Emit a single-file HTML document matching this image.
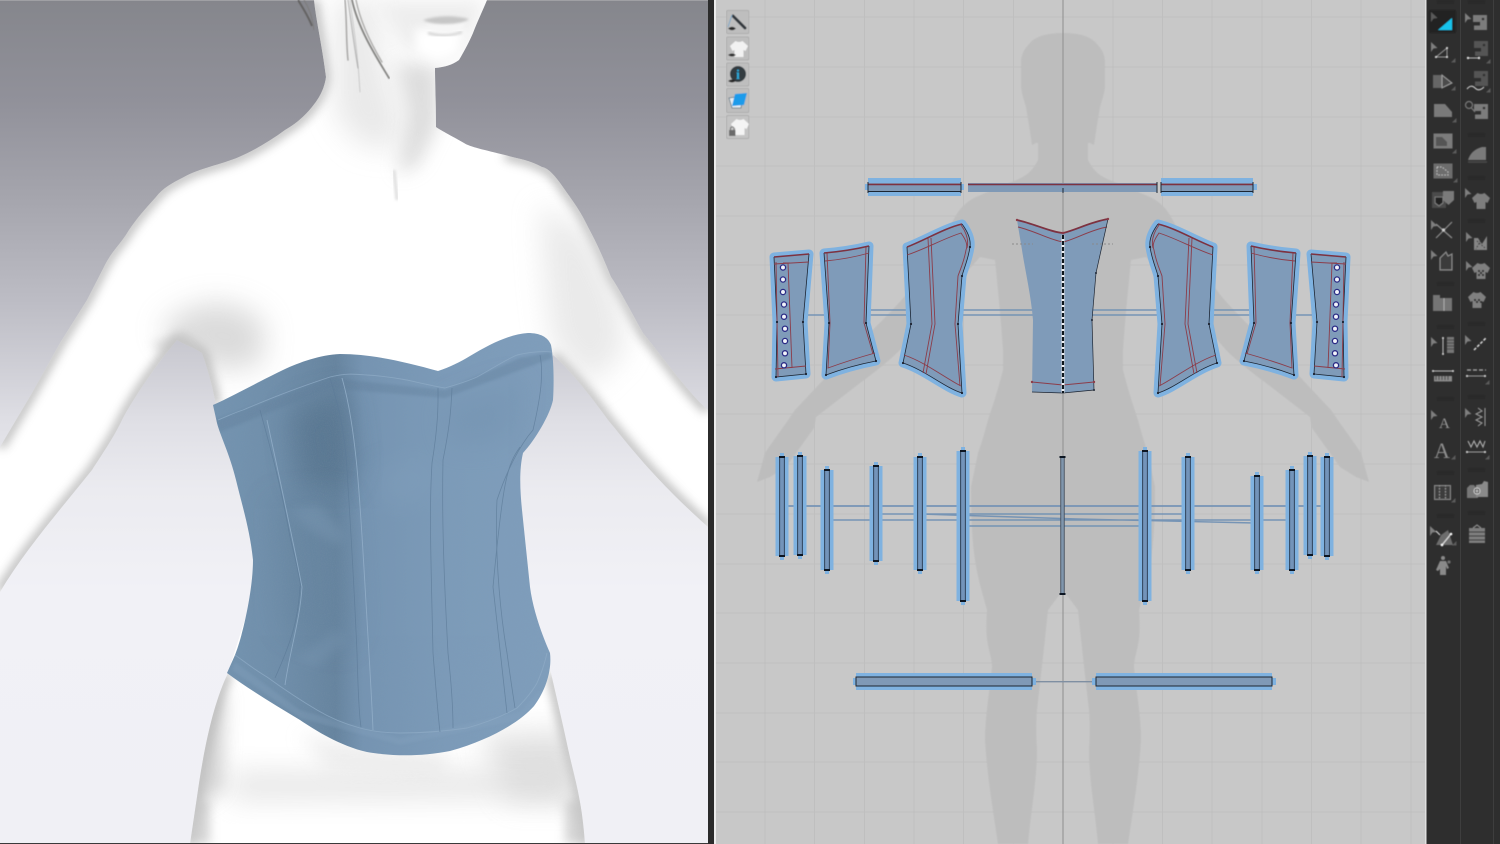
<!DOCTYPE html>
<html><head><meta charset="utf-8"><style>
html,body{margin:0;padding:0;width:1500px;height:844px;overflow:hidden;background:#2e2e2e}
svg{display:block}
</style></head><body>
<svg width="1500" height="844" viewBox="0 0 1500 844" xmlns="http://www.w3.org/2000/svg">
<defs>
<linearGradient id="bg" x1="0" y1="0" x2="0" y2="1">
<stop offset="0" stop-color="#85868c"/><stop offset=".12" stop-color="#91919a"/><stop offset=".24" stop-color="#a6a6ae"/><stop offset=".36" stop-color="#bdbdc5"/><stop offset=".44" stop-color="#d0d0d7"/><stop offset=".5" stop-color="#dfdfe5"/><stop offset=".58" stop-color="#ebebf0"/><stop offset=".7" stop-color="#f1f1f6"/><stop offset="1" stop-color="#f0f0f5"/>
</linearGradient>
<linearGradient id="cor" x1="0" y1="0" x2="1" y2="0">
<stop offset="0" stop-color="#7494b1"/><stop offset=".2" stop-color="#6f8eaa"/><stop offset=".36" stop-color="#66849f"/><stop offset=".44" stop-color="#7594b2"/><stop offset=".7" stop-color="#7c9bb9"/><stop offset="1" stop-color="#7f9ebc"/>
</linearGradient>
<filter id="b1" x="-30%" y="-30%" width="160%" height="160%"><feGaussianBlur stdDeviation="1.2"/></filter>
<filter id="b5" x="-30%" y="-30%" width="160%" height="160%"><feGaussianBlur stdDeviation="5"/></filter>
<filter id="b9" x="-60%" y="-60%" width="220%" height="220%"><feGaussianBlur stdDeviation="9"/></filter>
<filter id="b14" x="-80%" y="-80%" width="260%" height="260%"><feGaussianBlur stdDeviation="14"/></filter>
<filter id="s" x="-2%" y="-2%" width="104%" height="104%"><feGaussianBlur stdDeviation=".35"/></filter>
<filter id="t" x="-2%" y="-2%" width="104%" height="104%"><feGaussianBlur stdDeviation=".5"/></filter>
<filter id="noise" x="0" y="0" width="100%" height="100%"><feTurbulence type="fractalNoise" baseFrequency="1.1" numOctaves="2" seed="4"/><feColorMatrix values="0 0 0 0 .25  0 0 0 0 .33  0 0 0 0 .42  0 0 0 1.2 -.45"/></filter>
<clipPath id="bc"><path id="bodyp" d="M314 0C316 20 322 45 326 77C324 92 316 102 312 107C303 118 295 124 285 130C270 141 255 150 239 157C220 165 200 168 184 177C172 183 163 188 156 197C146 208 137 218 129 230C120 245 113 250 106 263L87 300L60 343L32 393L0 447L0 592C25 550 60 510 92 470C105 450 115 435 122 420C135 395 160 360 177 340C185 345 195 348 202 353C208 370 212 385 216 405L270 540L228 673C215 700 205 740 197 797L190 844L585 844C582 800 575 780 569 753C562 720 556 695 551 673L500 520L553 355C570 370 590 395 608 420C625 440 650 475 708 527L708 410C690 395 665 360 643 333C630 310 620 290 611 277C600 250 595 240 588 227C580 210 572 200 565 190C555 175 548 168 542 167C530 160 515 158 505 155C485 150 470 147 464 143C450 135 440 130 436 127C436 100 435 85 435 68C445 67 452 65 459 60C465 50 470 40 473 33C478 20 483 10 487 0Z"/></clipPath>
<clipPath id="cc"><path d="M213 405C235 395 262 380 283 370C300 362 320 355 340 354C372 354 405 362 438 371C450 367 460 362 470 356C490 344 510 334 528 333C540 333 548 337 551 345C554 360 554 385 553 400C550 415 535 440 523 453C519 470 520 490 522 510L530 587C533 610 542 635 550 653C552 670 546 690 534 706C520 722 490 740 450 751C420 757 390 756 367 752C340 746 315 730 300 720C275 705 250 690 227 673L235 655C243 635 253 590 253 560C250 530 242 505 236 480C230 455 220 435 217 423Z"/></clipPath>
<g id="pieces">
<g fill="none" stroke="#7fb2e0" stroke-width="9" stroke-linejoin="round">
<path d="M774 257L809 254L803 322L806 374L776 377L777 322Z"/>
<path d="M824 253Q848 251 869 246L866 323L876 361Q850 366 826 375L829 323Z"/>
<path d="M907 247C925 240 945 228 962 224C968 232 971 240 970 247C968 260 964 268 962 276L958 324L962 393C945 388 925 370 903 363L911 324Z"/>
</g>
<g fill="#7f9bb9">
<path d="M774 257L809 254L803 322L806 374L776 377L777 322Z"/>
<path d="M824 253Q848 251 869 246L866 323L876 361Q850 366 826 375L829 323Z"/>
<path d="M907 247C925 240 945 228 962 224C968 232 971 240 970 247C968 260 964 268 962 276L958 324L962 393C945 388 925 370 903 363L911 324Z"/>
</g>
<g fill="none" stroke="#1d2533" stroke-width=".8">
<path d="M774 257L777 322L776 377L806 374L803 322L809 254"/>
<path d="M824 253L829 323L826 375Q850 366 876 361L866 323L869 246"/>
<path d="M907 247L911 324L903 363C925 370 945 388 962 393L958 324L962 276C964 268 968 260 970 247C971 240 968 232 962 224"/>
</g>
<g fill="none" stroke="#8c3c4a" stroke-width=".9">
<path d="M774 264L809 262M776 262L778 377M788 263L792 368M783 263H790M775 369L806 366"/>
<path d="M825 261Q848 259 869 253M827 253L830 323L828 368Q850 360 875 353M866 246L864 323L873 354"/>
<path d="M907 255C925 249 945 238 961 233C966 240 968 245 966 250C964 262 960 270 958 276L955 324L960 386M928 238L932 324L923 373M931 238L935 324L926 374M904 355C925 362 945 378 961 386M961 225C966 232 969 240 967 248"/>
</g>
<g fill="none" stroke="#7d3040" stroke-width="1.600"><path d="M774 257L809 254"/><path d="M824 253Q848 251 869 246"/><path d="M907 247C925 240 945 228 962 224"/></g>
<g fill="#f2f4fa" stroke="#2b2b85" stroke-width="1.300">
<circle cx="783" cy="267.500" r="2.600"/><circle cx="783" cy="279.500" r="2.600"/><circle cx="783" cy="292" r="2.600"/><circle cx="784" cy="304.500" r="2.600"/><circle cx="784" cy="316.700" r="2.600"/><circle cx="785" cy="328.700" r="2.600"/><circle cx="785" cy="341" r="2.600"/><circle cx="785" cy="353.300" r="2.600"/><circle cx="784" cy="365.300" r="2.600"/>
</g>
<g fill="#1a1f2a"><circle cx="777" cy="322" r="1.100"/><circle cx="803" cy="322" r="1.100"/><circle cx="776" cy="377" r="1.100"/><circle cx="806" cy="374" r="1.100"/><circle cx="829" cy="323" r="1.100"/><circle cx="866" cy="323" r="1.100"/><circle cx="876" cy="361" r="1.100"/><circle cx="826" cy="375" r="1.100"/><circle cx="911" cy="324" r="1.100"/><circle cx="958" cy="324" r="1.100"/><circle cx="962" cy="393" r="1.100"/><circle cx="903" cy="363" r="1.100"/><circle cx="970" cy="247" r="1.100"/><circle cx="962" cy="276" r="1.100"/></g>
</g>
<g id="cur"><path d="M0 0L6.500 6L2.500 6.500L0 10Z" fill="#7f7f7f"/></g>
<g id="cor2"><path d="M4.500 0V4.500H0Z" fill="#5c5c5c"/></g>
<g id="sep"><path d="M0 0H17" stroke="#1e1e1e" stroke-opacity=".8"/><path d="M0 2H17" stroke="#1e1e1e" stroke-opacity=".55"/></g>
<g id="mach"><path d="M0 0H14V15H1V10.500H7V7H0Z" fill="#7c7c7c"/><circle cx="10" cy="4" r="1.300" fill="#2e2e2e"/></g>
<g id="shirt"><path d="M-9 2L-3.500 -3Q0 -1 3.500 -3L9 2L6.500 7L4.500 6V13H-4.500V6L-6.500 7Z"/></g>
<path id="sh" d="M1063 33C1048 33 1036 36 1030 43C1023 50 1021 56 1021 63L1021 87C1022 95 1024 100 1026 107L1029 125L1032 145L1036 143L1038 143L1038 160C1034 168 1030 172 1026 175C1020 179 1014 181 1009 183L976 197C966 202 960 208 955 217C940 245 925 270 904 297C880 325 850 350 826 377L795 410C785 425 775 438 765 453L757 482L770 477L786 467L814 428L816 417L860 383C875 372 890 360 900 350C925 320 955 285 980 257L995 260C998 290 1001 320 1003 350L1003 370C998 390 993 405 988 420C984 435 981 445 978 453L971 487C971 515 972 540 975 560C978 580 983 595 987 610C986 625 986 635 988 645C990 655 992 660 992 667C990 690 985 715 985 740C987 775 993 810 998 844L1028 844C1031 810 1037 780 1037 750C1036 735 1036 720 1037 710C1041 675 1045 640 1048 610L1063 590Z"/>
</defs>

<!-- Left 3D viewport -->
<rect x="0" y="0" width="708" height="844" fill="url(#bg)"/>
<rect x="0" y="0" width="708" height="1" fill="#a0a0a4"/>
<g stroke="#5c5a58" fill="none" filter="url(#t)" opacity=".8">
<path d="M298 0C303 8 309 18 312 26" stroke-width="2"/><path d="M304 0C309 8 312 16 314 30" stroke-width="1" stroke="#7c7a78"/>
</g>
<use href="#bodyp" fill="#fff"/>
<g clip-path="url(#bc)">
<g fill="none" stroke="#909090" filter="url(#b5)" opacity=".65" stroke-width="9">
<path d="M314 0C316 20 322 45 326 77C324 92 316 102 312 107C303 118 295 124 285 130C270 141 255 150 239 157C220 165 200 168 184 177C172 183 163 188 156 197C146 208 137 218 129 230C120 245 113 250 106 263L87 300L60 343L32 393L0 447"/>
<path d="M0 592C25 550 60 510 92 470C105 450 115 435 122 420C135 395 160 360 177 340C185 345 195 348 202 353C208 370 212 385 216 405"/>
<path d="M228 673C215 700 205 740 197 797L190 844M585 844C582 800 575 780 569 753C562 720 556 695 551 673"/>
<path d="M553 355C570 370 590 395 608 420C625 440 650 475 708 527M708 410C690 395 665 360 643 333C630 310 620 290 611 277C600 250 595 240 588 227C580 210 572 200 565 190C555 175 548 168 542 167C530 160 515 158 505 155"/>
</g>
<path d="M335 0H375L385 70L400 115L400 150L360 145L335 115Z" fill="#e4e4e4" filter="url(#b14)" opacity=".8"/>
<path d="M396 62L438 66L438 125L418 165L398 175L408 115Z" fill="#cfcfcf" filter="url(#b9)" opacity=".7"/>
<path d="M375 0H487L472 35L458 58L436 60L404 50Z" fill="#e9e9e9" filter="url(#b9)" opacity=".8"/>
<path d="M415 28H465L458 55L436 62L415 52Z" fill="#fff" filter="url(#b5)"/>
<path d="M423 20Q445 13 469 19Q463 24 445 24Q430 24 423 20Z" fill="#c6c6c6" filter="url(#b1)"/>
<path d="M426 24Q445 28 466 23Q460 32 445 32Q432 32 426 24Z" fill="#f6f6f6" filter="url(#b1)"/>
<path d="M428 33Q446 38 462 32" stroke="#d2d2d2" stroke-width="2.500" fill="none" filter="url(#b1)"/>
<path d="M394 170L397 200" stroke="#dedede" stroke-width="3" filter="url(#b1)"/>
<path d="M160 330C190 295 240 295 265 325L262 365L215 370L177 345Z" fill="#c8c8c8" filter="url(#b14)" opacity=".65"/>
<path d="M150 345L185 330L210 355L205 375Z" fill="#c4c4c4" filter="url(#b5)" opacity=".6"/>
<path d="M540 205L590 235L620 300L625 350L590 385L553 345L546 290Z" fill="#dcdcdc" filter="url(#b14)" opacity=".6"/>
<path d="M480 735L575 730L585 800L510 800Z" fill="#c9c9c9" filter="url(#b14)" opacity=".55"/>
<path d="M230 772L570 770L570 798L230 800Z" fill="#dcdcdc" filter="url(#b14)" opacity=".7"/>
<path d="M300 735L450 755L440 775L330 770Z" fill="#e4e4e4" filter="url(#b9)" opacity=".6"/>
<path d="M195 700L225 690L222 790L190 810Z" fill="#bdbdbd" filter="url(#b9)" opacity=".7"/>
<path d="M190 800L210 800L210 844H190ZM585 800L565 800L565 844H585Z" fill="#c4c4c4" filter="url(#b5)" opacity=".7"/>
</g>
<g fill="none" filter="url(#t)" stroke-linecap="round">
<path d="M345 0C347 22 346 42 348 60" stroke="#8a8988" stroke-width="1.500" opacity=".7"/>
<path d="M350 0C354 30 358 55 360 92" stroke="#b0b0b0" stroke-width=".8" opacity=".7"/>
<path d="M352 0C358 28 375 55 389 78" stroke="#6c6a68" stroke-width="1.800" opacity=".8"/>
<path d="M356 0C360 20 370 42 382 62" stroke="#8d8b89" stroke-width="1.300" opacity=".7"/>
<path d="M348 0C351 20 354 45 358 68" stroke="#9a9a9a" stroke-width="1.100" opacity=".7"/>
</g>
<!-- Corset -->
<g>
<path d="M213 405C235 395 262 380 283 370C300 362 320 355 340 354C372 354 405 362 438 371C450 367 460 362 470 356C490 344 510 334 528 333C540 333 548 337 551 345C554 360 554 385 553 400C550 415 535 440 523 453C519 470 520 490 522 510L530 587C533 610 542 635 550 653C552 670 546 690 534 706C520 722 490 740 450 751C420 757 390 756 367 752C340 746 315 730 300 720C275 705 250 690 227 673L235 655C243 635 253 590 253 560C250 530 242 505 236 480C230 455 220 435 217 423Z" fill="url(#cor)"/>
<g clip-path="url(#cc)">
<path d="M290 410L345 392L355 470L340 490L300 485Z" fill="#587690" filter="url(#b14)" opacity=".85"/>
<path d="M270 500L345 495L355 620L345 650L285 630Z" fill="#64829d" filter="url(#b14)" opacity=".45"/>
<path d="M290 510L318 505L345 535L338 545L310 530Z" fill="#7f9cb8" filter="url(#b5)" opacity=".35"/>
<path d="M295 660L335 630L348 640L315 668Z" fill="#7f9cb8" filter="url(#b5)" opacity=".3"/>
<path d="M368 475L425 455L440 490L390 510Z" fill="#86a4c1" filter="url(#b14)" opacity=".3"/>
<path d="M445 405L520 380L510 440L450 445Z" fill="#6f8fad" filter="url(#b14)" opacity=".4"/>
<path d="M215 420L330 378L445 390L520 358L550 352L552 358L520 370L445 398L330 388L220 432Z" fill="#5f7d99" filter="url(#b1)" opacity=".35"/>
<path d="M235 662L300 710L400 738L520 712L540 690L545 698L520 720L400 745L300 718L232 670Z" fill="#8aa8c4" filter="url(#b1)" opacity=".25"/>
<rect x="200" y="320" width="370" height="450" filter="url(#noise)" opacity=".3"/>
</g>
<g fill="none" stroke="#8fabc6" stroke-width=".9" opacity=".75">
<path d="M218 420C228 416 236 412 243 410C262 402 285 392 330 377C345 373 355 374 367 375C385 376 395 378 407 380C420 383 433 386 445 388C455 385 466 382 477 377C490 370 505 360 517 355C530 352 542 351 552 352" />
<path d="M235 655C245 662 255 670 267 677C285 690 300 700 317 710C332 719 345 724 360 728C375 732 388 733 400 733C425 733 447 731 467 728C485 723 503 716 517 708C525 700 532 692 537 683C542 672 545 662 547 653"/>
</g>
<g fill="none" stroke="#5d7b98" stroke-width=".8" opacity=".7">
<path d="M330 378C338 405 345 430 347 470C350 520 353 560 357 653C358 690 359 715 361 727"/>
<path d="M438 388C438 400 439 420 432 463C429 510 431 560 433 653C436 690 438 715 440 732"/>
<path d="M452 388C451 410 450 425 443 460C442 510 443 560 448 653C451 680 453 710 453 728"/>
<path d="M260 410C268 440 280 480 290 537C297 565 302 590 300 587C298 620 292 640 275 678"/>
<path d="M540 355C544 375 540 400 533 430C520 445 507 470 497 500C495 540 498 600 507 653C510 675 513 695 515 708"/>
<path d="M520 447C507 465 503 480 493 587C497 620 500 650 507 713"/>
</g>
<g fill="none" stroke="#93afc9" stroke-width=".9" opacity=".85"><path d="M342 378C357 430 360 500 367 620C370 670 372 705 373 730"/><path d="M267 420C280 480 293 540 302 587C300 620 290 650 285 685"/></g>
</g>
<rect x="0" y="843" width="708" height="1" fill="#3a3a3a"/>

<!-- divider -->
<rect x="708" y="0" width="6" height="844" fill="#2b2b2b"/>
<rect x="714" y="0" width="2" height="844" fill="#ececec"/>

<!-- Pattern window -->
<rect x="716" y="0" width="710" height="844" fill="#c8c8c8"/>
<g stroke="#bfbfbf" stroke-width="1">
<path d="M765 0V844M814.500 0V844M864.500 0V844M914 0V844M963.500 0V844M1013.500 0V844M1113 0V844M1162.500 0V844M1212 0V844M1262 0V844M1311.500 0V844M1361 0V844M1411 0V844"/>
<path d="M716 17H1426M716 67H1426M716 117H1426M716 166H1426M716 216H1426M716 265H1426M716 315H1426M716 365H1426M716 414H1426M716 464H1426M716 514H1426M716 564H1426M716 613H1426M716 663H1426M716 713H1426M716 762H1426M716 812H1426"/>
</g>
<!-- silhouette -->
<use href="#sh" fill="#bdbdbd" filter="url(#t)"/>
<use href="#sh" fill="#bdbdbd" filter="url(#t)" transform="translate(2126 0) scale(-1 1)"/>
<path d="M1063 0V844" stroke="#8e8e8e" stroke-width="1"/>

<g filter="url(#s)">
<!-- connecting lines -->
<g stroke="#6d8fb4" stroke-width="1.400" fill="none" opacity=".9">
<path d="M867 310H1255M803 315H1313M867 315H910" />
<path d="M783 506H1327" stroke-width="1.800"/>
<path d="M877 514H1187M829 520H1290M965 526H1143M920 514L1077 519L1255 523"/>
</g>
<!-- top strips -->
<path d="M868 178H961V196H868ZM1161 178H1253V196H1161Z" fill="#7fb2e0"/>
<path d="M958 184h6v6h-6ZM1251 184h6v6h-6ZM865 184h4v6h-4Z" fill="#7fb2e0"/>
<path d="M868 183H961V192H868ZM968 183H1157V192H968ZM1161 183H1253V192H1161Z" fill="#7f99b6"/>
<path d="M868 184.500H961M968 184.500H1157M1161 184.500H1253" stroke="#7d3040" stroke-width="1.400" fill="none"/>
<path d="M868 191.500H961M1161 191.500H1253M868 182V193M961 182V193M1157 182V193M1161 182V193M1253 182V193M1063 188V193" stroke="#1d2533" stroke-width="1" fill="none"/>
<!-- pieces -->
<use href="#pieces"/>
<use href="#pieces" transform="translate(2120 0) scale(-1 1)"/>
<!-- center piece -->
<path d="M1017 220C1035 224 1050 232 1063 233C1076 230 1090 222 1108 219L1096 273L1092 320L1094 390L1063 393L1032 392L1033 320C1031 295 1025 270 1022 250Z" fill="#7f9bb9"/>
<path d="M1017 220C1035 224 1050 232 1063 233C1076 230 1090 222 1108 219" fill="none" stroke="#7d3040" stroke-width="1.700"/>
<path d="M1018 227C1035 231 1050 240 1063 242C1076 239 1090 230 1107 227M1032 382L1063 385L1094 382" fill="none" stroke="#8c3c4a" stroke-width="1"/>
<path d="M1108 219L1096 273L1092 320L1094 390L1063 393M1063 393L1032 392" fill="none" stroke="#1d2533" stroke-width=".7"/>
<path d="M1063 235V393" stroke="#f0f0f4" stroke-width="3"/>
<path d="M1063 235V393" stroke="#10131a" stroke-width="2.200" stroke-dasharray="4 2"/>
<path d="M1012 244H1033M1092 244H1113" stroke="#8a8a8a" stroke-width="1" stroke-dasharray="2 2"/>
<g fill="#8c3c4a"><circle cx="1017" cy="220" r="1.200"/><circle cx="1108" cy="219" r="1.200"/><circle cx="1063" cy="233" r="1.300"/><circle cx="1032" cy="382" r="1.200"/><circle cx="1094" cy="382" r="1.200"/></g>
<g fill="#1d2533"><circle cx="1096" cy="273" r="1"/><circle cx="1092" cy="320" r="1"/><circle cx="1094" cy="390" r="1"/></g>
<!-- vertical strips -->
<path d="M782 457V556M800 456V555M827 470V570M876 466V561M920 457V570M963 451V601M1145 451V601M1188 457V570M1257 476V570M1292 470V570M1310 456V555M1327 457V556" stroke="#7fb2e0" stroke-width="13" fill="none"/>
<path d="M782 453V560M800 452V559M827 466V574M876 462V565M920 453V574M963 447V605M1145 447V605M1188 453V574M1257 472V574M1292 466V574M1310 452V559M1327 453V560" stroke="#7fb2e0" stroke-width="4" fill="none"/>
<path d="M782 457V556M800 456V555M827 470V570M876 466V561M920 457V570M963 451V601M1145 451V601M1188 457V570M1257 476V570M1292 470V570M1310 456V555M1327 457V556" stroke="#26364a" stroke-width="5.600" fill="none"/>
<path d="M782 457V556M800 456V555M827 470V570M876 466V561M920 457V570M963 451V601M1145 451V601M1188 457V570M1257 476V570M1292 470V570M1310 456V555M1327 457V556" stroke="#7394ba" stroke-width="3.800" fill="none"/>
<path d="M1062.500 457V594" stroke="#44505e" stroke-width="4.400"/><path d="M1062.500 457V594" stroke="#8096ad" stroke-width="2.600"/>
<path d="M779 457h6M779 556h6M797 456h6M797 555h6M824 470h6M824 570h6M873 466h6M873 561h6M917 457h6M917 570h6M960 451h6M960 601h6M1142 451h6M1142 601h6M1185 457h6M1185 570h6M1254 476h6M1254 570h6M1289 470h6M1289 570h6M1307 456h6M1307 555h6M1324 457h6M1324 556h6M1059.500 457h6M1059.500 594h6" stroke="#0f1621" stroke-width="2"/>
<!-- bottom strips -->
<path d="M1032 681.700H1096" stroke="#7f8fa2" stroke-width="1.300"/>
<path d="M856 673H1032V690H856ZM1096 673H1272V690H1096Z" fill="#7fb2e0"/>
<path d="M853 678h4v7h-4ZM1032 678h4v7h-4ZM1092 678h4v7h-4ZM1272 678h4v7h-4Z" fill="#7fb2e0"/>
<rect x="856" y="677" width="176" height="9" fill="#7f99b6" stroke="#1d2533" stroke-width="1"/>
<rect x="1096" y="677" width="176" height="9" fill="#7f99b6" stroke="#1d2533" stroke-width="1"/>
</g>

<!-- small palette -->
<g filter="url(#t)">
<g fill="#bebebe" stroke="#aeaeae" stroke-width="1">
<rect x="726.500" y="10.500" width="22.500" height="23" rx="1.500"/><rect x="726.500" y="37" width="22.500" height="23" rx="1.500"/><rect x="726.500" y="63" width="22.500" height="23" rx="1.500"/><rect x="726.500" y="88.500" width="22.500" height="24" rx="1.500"/><rect x="726.500" y="115.500" width="22.500" height="23" rx="1.500" fill="#c4c4c4"/>
</g>
<path d="M733 16L745 28" stroke="#33373c" stroke-width="3" stroke-linecap="round"/>
<path d="M732 15L728 27" stroke="#7ea7c8" stroke-width="1"/>
<path d="M728 28.500Q732 25 736 28.500Q732 32 728 28.500Z" fill="#2b2b2b"/>
<g transform="translate(739 44)" fill="#f2f2f2"><use href="#shirt"/></g>
<path d="M728 55Q732 52 736 55Q732 58 728 55Z" fill="#2b2b2b"/>
<circle cx="738" cy="74" r="8" fill="#333a40"/>
<text x="738" y="79" font-family="Liberation Serif, serif" font-weight="700" font-size="14" fill="#2aa8d8" text-anchor="middle">i</text>
<path d="M728 81Q732 78 736 81Q732 84 728 81Z" fill="#262626"/>
<path d="M729 98L743 96L741 108L732 108Z" fill="#e8eef3" stroke="#58707f" stroke-width=".8"/>
<path d="M735 94L747 93L744 105L732 106Z" fill="#1d9bea"/>
<g transform="translate(740 122)" fill="#f4f4f4"><use href="#shirt"/></g>
<rect x="729" y="130" width="6.500" height="6" fill="#6a6a6a"/><path d="M730.500 130V128Q732.200 125.500 734 128V130" fill="none" stroke="#6a6a6a" stroke-width="1"/>
</g>

<!-- Right toolbar -->
<rect x="1425" y="0" width="1.500" height="844" fill="#e0e0e0"/>
<rect x="1426.500" y="0" width="73.500" height="844" fill="#2e2e2e"/>
<path d="M1460.500 0V844M1493.500 0V844" stroke="#3e3e3e" stroke-width="1"/>
<g filter="url(#t)">
<g transform="translate(1437 0)">
<use href="#sep" y="1"/><use href="#sep" y="283"/><use href="#sep" y="326"/><use href="#sep" y="398"/><use href="#sep" y="472"/><use href="#sep" y="515"/>
</g>
<g transform="translate(1468 0)">
<use href="#sep" y="1"/><use href="#sep" y="134"/><use href="#sep" y="177"/><use href="#sep" y="220"/><use href="#sep" y="323"/><use href="#sep" y="396"/><use href="#sep" y="469"/><use href="#sep" y="512"/>
</g>
<!-- left column -->
<rect x="1429" y="10" width="27" height="23" rx="2" fill="#242424"/>
<path d="M1438 30L1452 18V30Z" fill="#19c3ec"/>
<use href="#cur" x="1431" y="12" opacity=".6"/>
<use href="#cur" x="1431" y="42"/>
<path d="M1436 57L1447 48V57Z" fill="none" stroke="#9a9a9a" stroke-width="1"/>
<g fill="#d8d8d8"><circle cx="1436" cy="57" r="1.100"/><circle cx="1447" cy="48" r="1.100"/><circle cx="1447" cy="57" r="1.100"/></g><use href="#cor2" x="1451" y="58"/>
<path d="M1433 75H1442V88H1433Z" fill="#666"/><path d="M1442 75L1452 83L1442 88Z" fill="#4c4c4c" stroke="#a0a0a0"/><use href="#cor2" x="1451" y="86"/>
<path d="M1434 104H1445L1452 112V117H1434Z" fill="#7a7a7a"/><use href="#cor2" x="1452" y="118"/>
<rect x="1433.500" y="133.500" width="19" height="15" fill="#7c7c7c"/><path d="M1436 137H1442L1447 142V146H1436Z" fill="#555"/><use href="#cor2" x="1452" y="149"/>
<rect x="1433.500" y="163.500" width="19" height="15" fill="#6d6d6d"/><path d="M1437 167H1442L1448 172V175H1437Z" fill="none" stroke="#c0c0c0" stroke-width="1" stroke-dasharray="1.500 1.500"/><use href="#cor2" x="1453" y="178"/>
<rect x="1432" y="192" width="14" height="16" fill="#4c4c4c"/><path d="M1443 191H1454V200L1448.500 205L1443 200Z" fill="#7a7a7a"/><path d="M1435 197H1443V203L1439 206L1435 203Z" fill="#222" stroke="#888" stroke-width=".8"/>
<path d="M1436 238L1452 222M1436 224L1452 238" stroke="#8e8e8e" stroke-width="1.200"/><circle cx="1443.500" cy="230" r="1.600" fill="#cfcfcf"/><use href="#cur" x="1431" y="220"/>
<path d="M1440 268V258L1446 252L1448 256L1452 254V270H1440Z" fill="#3a3a3a" stroke="#8c8c8c" stroke-width="1.200"/><use href="#cur" x="1431" y="250"/>
<path d="M1433 295H1440V298H1452V311H1433Z" fill="#747474"/><path d="M1444 298V311" stroke="#bcbcbc" stroke-width=".8"/>
<use href="#cur" x="1431" y="337"/>
<path d="M1443 338V354" stroke="#c0c0c0" stroke-width="1"/><circle cx="1443" cy="338" r="1" fill="#ddd"/><circle cx="1443" cy="354" r="1" fill="#ddd"/>
<path d="M1447 337H1454V353H1447Z" fill="#777"/><path d="M1447 340H1454M1447 343H1454M1447 346H1454M1447 349H1454" stroke="#3a3a3a" stroke-width=".8"/>
<path d="M1433 371H1453" stroke="#c0c0c0" stroke-width="1"/><circle cx="1433" cy="371" r="1" fill="#ddd"/><circle cx="1453" cy="371" r="1" fill="#ddd"/>
<rect x="1434" y="376" width="18" height="5.500" fill="#8a8a8a"/><path d="M1436 376V380M1439 376V380M1442 376V380M1445 376V380M1448 376V380" stroke="#333" stroke-width=".8"/>
<use href="#cur" x="1431" y="410"/>
<text x="1439" y="428" font-family="Liberation Serif, serif" font-size="15" fill="#9a9a9a">A</text>
<text x="1434" y="458" font-family="Liberation Serif, serif" font-size="22" fill="#8e8e8e">A</text><use href="#cor2" x="1451" y="455"/>
<rect x="1434.500" y="485.500" width="16" height="14" fill="#3c3c3c" stroke="#8a8a8a"/><path d="M1439.500 485V500M1445.500 485V500" stroke="#9a9a9a" stroke-width="1" stroke-dasharray="1.500 1.500"/><use href="#cor2" x="1451" y="498"/>
<use href="#cur" x="1430" y="526"/>
<path d="M1436 545L1441 535L1448 530L1453 545Z" fill="#6d6d6d"/><path d="M1436 531L1440 535M1442 545L1451 534" stroke="#e0e0e0" stroke-width="1.100"/><circle cx="1442" cy="545" r="1.300" fill="#fff"/><circle cx="1451" cy="534" r="1.300" fill="#fff"/><use href="#cor2" x="1452" y="541"/>
<circle cx="1443" cy="558" r="2" fill="#8a8a8a"/><path d="M1436 570L1440 561H1446L1449 568L1447 569L1446 566V575H1440V569L1438 571Z" fill="#8a8a8a"/><circle cx="1449" cy="562" r="1.600" fill="#6e6e6e"/>
<!-- right column -->
<use href="#cur" x="1465" y="13"/><use href="#mach" x="1473" y="15"/>
<use href="#mach" x="1474" y="41" opacity=".5"/><path d="M1468 58H1479" stroke="#bcbcbc"/><circle cx="1468" cy="58" r="1.200" fill="#e0e0e0"/><circle cx="1479" cy="58" r="1.200" fill="#e0e0e0"/><use href="#cor2" x="1486" y="59"/>
<use href="#mach" x="1474" y="71" opacity=".5"/><path d="M1467 89Q1471 84 1475 88T1484 87" fill="none" stroke="#cfcfcf" stroke-width="1.100"/><use href="#cor2" x="1486" y="88"/>
<circle cx="1469" cy="105" r="3.500" fill="none" stroke="#7a7a7a" stroke-width="1.200"/><path d="M1471.500 108L1475 112" stroke="#7a7a7a" stroke-width="1.200"/><use href="#mach" x="1474" y="104"/>
<path d="M1468 160Q1471 150 1482 147H1486V160Z" fill="#7a7a7a"/><path d="M1468 162H1487" stroke="#4a4a4a" stroke-width="1.500"/>
<use href="#cur" x="1465" y="188"/><g transform="translate(1481 196)" fill="#7e7e7e"><use href="#shirt"/></g>
<use href="#cur" x="1466" y="232"/><path d="M1474 238H1478L1482 244L1487 236V250H1474Z" fill="#858585"/><path d="M1477 241L1485 248M1482 238L1476 249" stroke="#333" stroke-dasharray="1.500 1.500"/>
<use href="#cur" x="1466" y="261"/><g transform="translate(1481 266)" fill="#808080"><use href="#shirt"/></g><path d="M1478 270h2v2h-2ZM1482 270h2v2h-2ZM1480 272h2v2h-2ZM1478 274h2v2h-2ZM1482 274h2v2h-2Z" fill="#252525"/>
<g transform="translate(1477 295)" fill="#808080"><use href="#shirt"/></g><path d="M1474 299h2v2h-2ZM1478 299h2v2h-2ZM1476 301h2v2h-2ZM1480 301h2v2h-2Z" fill="#252525"/>
<use href="#cur" x="1465" y="335"/>
<path d="M1474 350L1486 338" stroke="#dcdcdc" stroke-width="1.500" stroke-dasharray="3 1.500"/>
<path d="M1467 370H1486" stroke="#b0b0b0" stroke-width="1.300" stroke-dasharray="4 2"/><path d="M1467 376H1485" stroke="#9a9a9a"/><circle cx="1467" cy="376" r="1.100" fill="#d0d0d0"/><circle cx="1485" cy="376" r="1.100" fill="#d0d0d0"/><use href="#cor2" x="1485" y="380"/>
<use href="#cur" x="1465" y="408"/>
<path d="M1478 408L1482 411L1476 414L1482 417L1476 420L1482 423L1478 426" fill="none" stroke="#a0a0a0"/><path d="M1485 408V426" stroke="#a0a0a0"/>
<path d="M1468 441L1471 447L1474 441L1477 447L1480 441L1483 447L1485 441" fill="none" stroke="#b0b0b0" stroke-width="1.100"/><path d="M1467 452H1485" stroke="#a0a0a0"/><circle cx="1467" cy="452" r="1.100" fill="#d0d0d0"/><circle cx="1485" cy="452" r="1.100" fill="#d0d0d0"/><use href="#cor2" x="1485" y="455"/>
<path d="M1467 488L1470 485H1474L1478 490V498H1467Z" fill="#777"/><path d="M1476 485L1482 484L1484 481L1488 482V497H1476Z" fill="#8a8a8a"/><circle cx="1477" cy="491" r="3" fill="#2a2a2a" stroke="#cfcfcf"/><path d="M1475 491H1479M1477 489V493" stroke="#e0e0e0" stroke-width=".8"/>
<path d="M1469 528H1485V543H1469Z" fill="#7e7e7e"/><path d="M1469 532H1485M1469 536H1485M1469 540H1485" stroke="#2b2b2b" stroke-width="1"/><path d="M1473 528L1477 525L1481 528" fill="none" stroke="#8c8c8c" stroke-width="1.200"/>
</g>
</svg>
</body></html>
